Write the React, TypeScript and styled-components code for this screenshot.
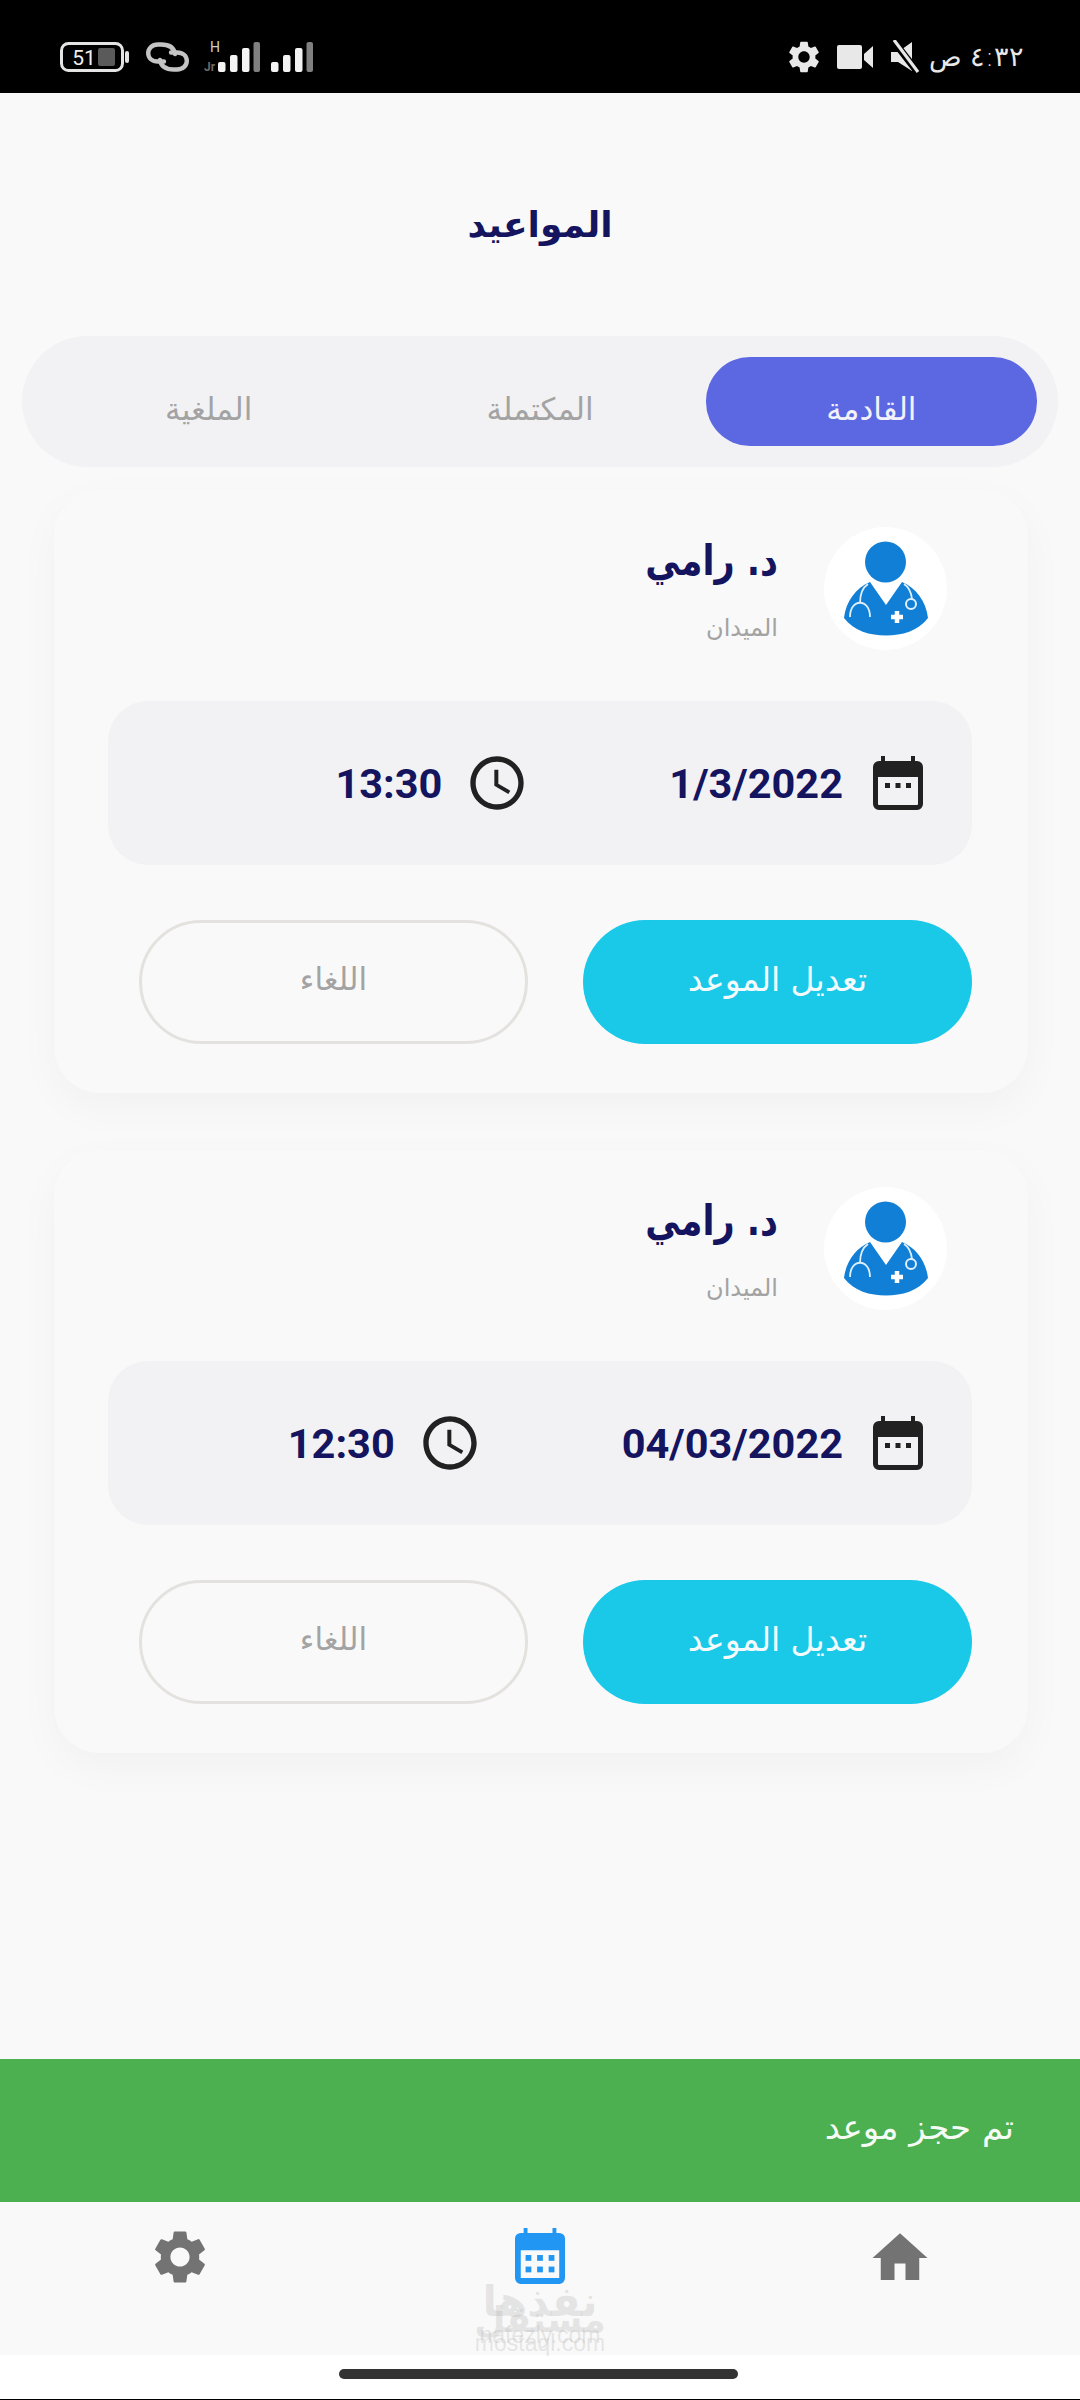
import React from "react";
import styled, { createGlobalStyle } from "styled-components";
import { MdHome, MdSettings, MdOutlineAccessTime } from "react-icons/md";

const Global = createGlobalStyle`
  html, body {
    margin: 0;
    padding: 0;
    background: #f9f9f9;
  }
  * { box-sizing: border-box; }
`;

const Screen = styled.div`
  position: relative;
  width: 1080px;
  height: 2400px;
  display: flex;
  flex-direction: column;
  background: #f9f9f9;
  font-family: "DejaVu Sans", "Noto Sans", sans-serif;
  overflow: hidden;
`;

const StatusBar = styled.div`
  height: 93px;
  flex: none;
  background: #000;
  display: flex;
  justify-content: space-between;
  align-items: center;
  padding: 20px 56px 0 60px;
  color: #e8e8e8;
`;
const StatusGroup = styled.div<{ $gap: number }>`
  display: flex;
  align-items: center;
  gap: ${(p) => p.$gap}px;
`;
const StatusTime = styled.span`
  font-family: "DejaVu Sans", sans-serif;
  font-size: 27px;
  font-weight: 200;
  line-height: 32px;
  direction: rtl;
  word-spacing: -1px;
`;
const MuteSvg = styled.svg`
  margin: 0 -8px 0 4px;
`;

const Main = styled.div`
  flex: 1;
  display: flex;
  flex-direction: column;
`;
const Title = styled.h1`
  margin: 0;
  height: 243px;
  padding-top: 106px;
  text-align: center;
  font-size: 36px;
  line-height: 52px;
  font-weight: 700;
  color: #14145f;
`;
const Tabs = styled.div`
  margin: 0 22px;
  height: 131px;
  padding: 21px;
  border-radius: 66px;
  background: #f2f2f4;
  display: grid;
  grid-template-columns: repeat(3, 1fr);
  direction: rtl;
`;
const Tab = styled.div<{ $active?: boolean }>`
  display: flex;
  align-items: center;
  justify-content: center;
  padding-top: 14px;
  border-radius: 44px;
  font-size: 31px;
  background: ${(p) => (p.$active ? "#5c67e2" : "transparent")};
  color: ${(p) => (p.$active ? "#f2f2fb" : "#a3a3a3")};
`;

const Cards = styled.div`
  display: flex;
  flex-direction: column;
  gap: 57px;
  margin: 23px 52px 0 54px;
`;
const Card = styled.div`
  height: 603px;
  padding: 37px 56px 0 54px;
  border-radius: 46px;
  background: #f9f9f9;
  box-shadow: 0 14px 44px rgba(0, 0, 0, 0.035);
  direction: rtl;
`;
const Header = styled.div`
  display: flex;
  gap: 46px;
  padding-right: 25px;
  height: 174px;
`;
const Avatar = styled.div`
  width: 123px;
  height: 123px;
  border-radius: 50%;
  background: #fff;
  flex: none;
  display: flex;
  align-items: center;
  justify-content: center;
`;
const DoctorInfo = styled.div`
  display: flex;
  flex-direction: column;
  align-items: flex-start;
  padding-top: 4px;
`;
const DoctorName = styled.div`
  font-size: 35px;
  line-height: 60px;
  font-weight: 700;
  color: #14145f;
  transform: scaleY(1.2);
`;
const DoctorPlace = styled.div`
  margin-top: 21px;
  font-size: 24px;
  line-height: 32px;
  color: #a3a3a3;
`;
const InfoBox = styled.div`
  height: 164px;
  padding: 0 49px;
  border-radius: 40px;
  background: #f2f2f4;
  display: flex;
  align-items: center;
  gap: 145px;
`;
const InfoItem = styled.div`
  display: flex;
  align-items: center;
  gap: 30px;
  color: #212121;
`;
const ClockSlot = styled.span`
  display: flex;
  margin: 0 -5px 0 -7px;
`;
const InfoText = styled.span`
  font-family: Roboto, "Liberation Sans", sans-serif;
  font-size: 41.5px;
  font-weight: 700;
  color: #14145f;
  direction: ltr;
`;
const Actions = styled.div`
  display: flex;
  margin-top: 55px;
  gap: 55px;
  padding-left: 31px;
`;
const EditButton = styled.button`
  width: 389px;
  height: 124px;
  border: 0;
  border-radius: 62px;
  background: #1ac8e8;
  color: #f3fbfd;
  font-family: inherit;
  font-size: 33px;
  padding: 0 0 5px;
`;
const CancelButton = styled.button`
  width: 389px;
  height: 124px;
  border: 3px solid #e4e2de;
  border-radius: 62px;
  background: transparent;
  color: #a3a3a3;
  font-family: inherit;
  font-size: 31px;
  padding: 0 0 6px;
`;

const Snackbar = styled.div`
  height: 143px;
  flex: none;
  background: #4caf50;
  color: #f5fbf5;
  display: flex;
  align-items: center;
  padding: 0 66px 7px 0;
  direction: rtl;
  font-size: 34px;
`;
const BottomNav = styled.nav`
  position: relative;
  height: 153px;
  flex: none;
  background: #f9f9f9;
  display: grid;
  grid-template-columns: repeat(3, 1fr);
  padding-top: 23px;
  justify-items: center;
  align-items: start;
  color: #737373;
`;
const NavCalendarSvg = styled.svg`
  margin-top: 3px;
`;
const Watermark = styled.div`
  position: absolute;
  left: 470px;
  top: 76px;
  width: 140px;
  height: 76px;
  text-align: center;
  color: rgba(190, 190, 190, 0.34);
`;
const WatermarkLogo = styled.div<{ $top: number; $size: number }>`
  position: absolute;
  left: 0;
  right: 0;
  top: ${(p) => p.$top}px;
  font-size: ${(p) => p.$size}px;
  line-height: 44px;
  font-weight: 700;
`;
const WatermarkUrl = styled.div<{ $top: number }>`
  position: absolute;
  left: 0;
  right: 0;
  top: ${(p) => p.$top}px;
  font-family: "Liberation Sans", sans-serif;
  font-size: 23px;
  line-height: 26px;
`;
const HomeArea = styled.div`
  height: 45px;
  flex: none;
  background: #fff;
  display: flex;
  justify-content: center;
  padding: 14px 0 0 0;
  border-bottom: 1px solid #000;
`;
const Handle = styled.div`
  width: 399px;
  height: 10px;
  margin-right: 4px;
  border-radius: 5px;
  background: #333;
`;

const Battery = () => (
  <svg width="71" height="30" viewBox="0 0 71 30">
    <rect x="1.5" y="1.5" width="61" height="27" rx="7" fill="none" stroke="#e4e4e4" strokeWidth="3" />
    <rect x="38" y="6" width="17" height="18" rx="2" fill="#5a5a5a" />
    <rect x="65" y="9" width="4" height="12" rx="2" fill="#e4e4e4" />
    <text x="24" y="23" textAnchor="middle" fontSize="21" fill="#eee" fontFamily="Roboto, sans-serif">51</text>
  </svg>
);

const LinkIcon = () => (
  <svg width="43" height="30" viewBox="0 0 43 30" fill="none" stroke="#c4c4c4" strokeWidth="4.4" strokeLinecap="round">
    <path d="M29 12 C28 5 23 2.5 15 2.5 H12 C6 2.5 2.2 6.5 2.2 11 C2.2 16 6 19.5 12 19.5 L18 19.5" />
    <path d="M29 12 C28 5 23 2.5 15 2.5 H12 C6 2.5 2.2 6.5 2.2 11 C2.2 16 6 19.5 12 19.5 L18 19.5" transform="rotate(180 21.5 15)" />
  </svg>
);

const bars = [
  { x: 0, h: 10 },
  { x: 12, h: 17 },
  { x: 24, h: 24 },
];

const Signal = ({ hPlus }: { hPlus?: boolean }) => (
  <svg width={hPlus ? 57 : 42} height="30" viewBox={hPlus ? "0 0 57 30" : "0 0 42 30"} overflow="visible">
    {hPlus && (
      <>
        <text x="6" y="10" fontSize="14" fill="#d0d0d0" fontFamily="Roboto, sans-serif">H</text>
        <text x="0" y="29" fontSize="12" fontWeight="700" fill="#6a6a6a" fontFamily="Roboto, sans-serif">Jr</text>
      </>
    )}
    <g transform={hPlus ? "translate(14 0)" : undefined}>
      {bars.map((b) => (
        <rect key={b.x} x={b.x} y={30 - b.h} width="7.5" height={b.h} rx="2" fill="#f4f4f4" />
      ))}
      <rect x="35.5" y="0" width="6.5" height="30" rx="2" fill="#808080" />
    </g>
  </svg>
);

const VideoIcon = () => (
  <svg width="36" height="24" viewBox="0 0 36 24" fill="#e8e8e8">
    <rect x="0" y="0" width="25" height="24" rx="2" />
    <path d="M27 9 L36 1 V23 L27 15 Z" />
  </svg>
);

const MuteIcon = () => (
  <MuteSvg width="32" height="33" viewBox="0 0 32 33">
    <path d="M0 12 H7 L21 2 V31 L7 22 H0 Z" fill="#e8e8e8" />
    <path d="M1 -1 L28 34" stroke="#000" strokeWidth="7" />
    <path d="M3 0 L27 32" stroke="#e8e8e8" strokeWidth="3.2" />
  </MuteSvg>
);

const DoctorIcon = () => (
  <svg width="84" height="95" viewBox="0 0 84 95">
    <circle cx="41.5" cy="21" r="20.5" fill="#127fd6" />
    <path d="M26 41 C12 47 2 60 0 77 C10 90 26 94.5 42 94.5 C58 94.5 74 90 84 77 C82 60 72 47 58 41 L42 64 Z" fill="#127fd6" />
    <path d="M24 43 C18 47 16 54 16 62 M60 43 C65 46 67 50 68 58" fill="none" stroke="#dff0fb" strokeWidth="1.8" />
    <path d="M6 76 C6 57 26 57 26 76" fill="none" stroke="#dff0fb" strokeWidth="1.8" />
    <circle cx="67" cy="63" r="5" fill="none" stroke="#dff0fb" strokeWidth="2" />
    <path d="M47 76 H59 M53 70 V82" stroke="#fff" strokeWidth="4.5" />
  </svg>
);

const CalendarIcon = () => (
  <svg width="50" height="54" viewBox="0 0 50 54" fill="#212121">
    <path d="M8 0 h4 v5 h26 v-5 h4 v5 h2 a6 6 0 0 1 6 6 v37 a6 6 0 0 1 -6 6 h-38 a6 6 0 0 1 -6 -6 v-37 a6 6 0 0 1 6 -6 h2 z M5 21 v27 a1 1 0 0 0 1 1 h38 a1 1 0 0 0 1 -1 v-27 z" fillRule="evenodd" />
    <rect x="12" y="27" width="5" height="5" />
    <rect x="22.5" y="27" width="5" height="5" />
    <rect x="33" y="27" width="5" height="5" />
  </svg>
);

const NavCalendar = () => (
  <NavCalendarSvg width="50" height="56" viewBox="0 0 52 58" fill="#2196f3">
    <path d="M9 0 h4 v5 h26 v-5 h4 v5 h3 a6 6 0 0 1 6 6 v41 a6 6 0 0 1 -6 6 h-40 a6 6 0 0 1 -6 -6 v-41 a6 6 0 0 1 6 -6 h3 z M6 23 v29 h40 v-29 z" fillRule="evenodd" />
    <rect x="11" y="28" width="6" height="6" />
    <rect x="23" y="28" width="6" height="6" />
    <rect x="35" y="28" width="6" height="6" />
    <rect x="11" y="40" width="6" height="6" />
    <rect x="23" y="40" width="6" height="6" />
    <rect x="35" y="40" width="6" height="6" />
  </NavCalendarSvg>
);

const appointments = [
  { date: "1/3/2022", time: "13:30" },
  { date: "04/03/2022", time: "12:30" },
];

export default function App() {
  return (
    <Screen>
      <Global />
      <StatusBar>
        <StatusGroup $gap={15}>
          <Battery />
          <LinkIcon />
          <StatusGroup $gap={10}>
            <Signal hPlus />
            <Signal />
          </StatusGroup>
        </StatusGroup>
        <StatusGroup $gap={14}>
          <MdSettings size={38} />
          <VideoIcon />
          <MuteIcon />
          <StatusTime>٤:٣٢ ص</StatusTime>
        </StatusGroup>
      </StatusBar>
      <Main>
        <Title>المواعيد</Title>
        <Tabs>
          <Tab $active>القادمة</Tab>
          <Tab>المكتملة</Tab>
          <Tab>الملغية</Tab>
        </Tabs>
        <Cards>
          {appointments.map((a) => (
            <Card key={a.date}>
              <Header>
                <Avatar>
                  <DoctorIcon />
                </Avatar>
                <DoctorInfo>
                  <DoctorName>د. رامي</DoctorName>
                  <DoctorPlace>الميدان</DoctorPlace>
                </DoctorInfo>
              </Header>
              <InfoBox>
                <InfoItem>
                  <CalendarIcon />
                  <InfoText>{a.date}</InfoText>
                </InfoItem>
                <InfoItem>
                  <ClockSlot>
                    <MdOutlineAccessTime size={64} />
                  </ClockSlot>
                  <InfoText>{a.time}</InfoText>
                </InfoItem>
              </InfoBox>
              <Actions>
                <EditButton>تعديل الموعد</EditButton>
                <CancelButton>اللغاء</CancelButton>
              </Actions>
            </Card>
          ))}
        </Cards>
      </Main>
      <Snackbar>تم حجز موعد</Snackbar>
      <BottomNav>
        <MdSettings size={64} />
        <NavCalendar />
        <MdHome size={66} />
        <Watermark>
          <WatermarkLogo $top={2} $size={42}>نفذها</WatermarkLogo>
          <WatermarkLogo $top={20} $size={36}>مستقل</WatermarkLogo>
          <WatermarkUrl $top={44}>nafezly.com</WatermarkUrl>
          <WatermarkUrl $top={52}>mostaql.com</WatermarkUrl>
        </Watermark>
      </BottomNav>
      <HomeArea>
        <Handle />
      </HomeArea>
    </Screen>
  );
}
